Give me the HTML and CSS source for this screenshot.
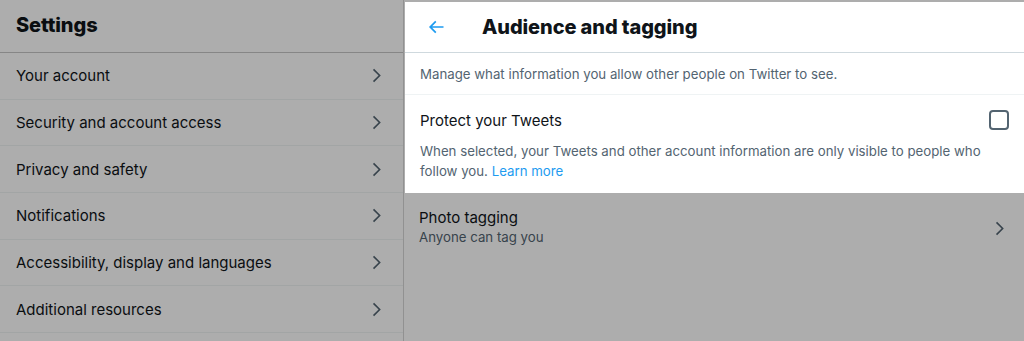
FILE: index.html
```html
<!DOCTYPE html>
<html>
<head>
<meta charset="utf-8">
<link rel="stylesheet" href="styles.css">
</head>
<body>
<div class="app">
  <nav class="nav">
    <div class="nav-head"><h1>Settings</h1></div>
    <div class="nav-row"><span>Your account</span><svg class="chev" viewBox="0 0 24 24"><path d="M14.586 12L7.543 4.96l1.414-1.42L17.414 12l-8.457 8.46-1.414-1.42L14.586 12z"/></svg></div>
    <div class="nav-row"><span>Security and account access</span><svg class="chev" viewBox="0 0 24 24"><path d="M14.586 12L7.543 4.96l1.414-1.42L17.414 12l-8.457 8.46-1.414-1.42L14.586 12z"/></svg></div>
    <div class="nav-row"><span>Privacy and safety</span><svg class="chev" viewBox="0 0 24 24"><path d="M14.586 12L7.543 4.96l1.414-1.42L17.414 12l-8.457 8.46-1.414-1.42L14.586 12z"/></svg></div>
    <div class="nav-row"><span>Notifications</span><svg class="chev" viewBox="0 0 24 24"><path d="M14.586 12L7.543 4.96l1.414-1.42L17.414 12l-8.457 8.46-1.414-1.42L14.586 12z"/></svg></div>
    <div class="nav-row"><span>Accessibility, display and languages</span><svg class="chev" viewBox="0 0 24 24"><path d="M14.586 12L7.543 4.96l1.414-1.42L17.414 12l-8.457 8.46-1.414-1.42L14.586 12z"/></svg></div>
    <div class="nav-row"><span>Additional resources</span><svg class="chev" viewBox="0 0 24 24"><path d="M14.586 12L7.543 4.96l1.414-1.42L17.414 12l-8.457 8.46-1.414-1.42L14.586 12z"/></svg></div>
  </nav>
  <main class="detail">
    <section class="focus">
      <div class="detail-head">
        <svg class="back" viewBox="0 0 24 24"><path d="M7.414 13l5.043 5.04-1.414 1.42L3.586 12l7.457-7.46 1.414 1.42L7.414 11H21v2H7.414z"/></svg>
        <h2>Audience and tagging</h2>
      </div>
      <p class="intro">Manage what information you allow other people on Twitter to see.</p>
      <div class="protect">
        <div class="protect-top">
          <span class="label">Protect your Tweets</span>
          <span class="checkbox"></span>
        </div>
        <p class="desc"><span>When selected, your Tweets and other account information are only visible to people who follow you.</span> <span class="link">Learn more</span></p>
      </div>
    </section>
    <div class="tag-row">
      <div class="tag-text">
        <div class="label">Photo tagging</div>
        <div class="sub">Anyone can tag you</div>
      </div>
      <svg class="chev" viewBox="0 0 24 24"><path d="M14.586 12L7.543 4.96l1.414-1.42L17.414 12l-8.457 8.46-1.414-1.42L14.586 12z"/></svg>
    </div>
  </main>
</div>
</body>
</html>
```
FILE: styles.css
```css
* { box-sizing: border-box; }
html, body { margin: 0; padding: 0; }
body {
  width: 1024px;
  height: 341px;
  overflow: hidden;
  background: #ffffff;
  font-family: Inter, "Liberation Sans", sans-serif;
  color: #0f1419;
}
.app {
  display: flex;
  height: 341px;
}
.nav {
  width: 404px;
  flex: none;
  border-right: 1px solid #d6d6d6;
}
.nav-head {
  height: 53px;
  border-bottom: 1px solid #c6c6c6;
  display: flex;
  align-items: center;
  padding: 0 16px 2px;
}
.nav-head h1 {
  margin: 0;
  font-size: 20px;
  font-weight: 800;
  letter-spacing: -0.1px;
}
.nav-row {
  height: 46.67px;
  border-bottom: 1px solid #eff3f4;
  display: flex;
  align-items: center;
  justify-content: space-between;
  padding: 0 16px;
  font-size: 15px;
}
.chev {
  width: 19px;
  height: 19px;
  fill: #536471;
  flex: none;
}
.nav-row .chev { margin-right: 1px; }
.detail {
  flex: 1;
  padding-top: 2px;
}
.focus {
  position: relative;
  z-index: 1;
  margin-left: 1px;
  background: #ffffff;
  box-shadow: 0 0 0 3000px rgba(0, 0, 0, 0.32);
}
.detail-head {
  height: 51px;
  border-bottom: 1px solid #cfd9de;
  display: flex;
  align-items: center;
  padding: 0 16px 1px 21px;
}
.back {
  width: 20px;
  height: 20px;
  fill: #1d9bf0;
  margin-right: 36px;
}
.detail-head h2 {
  margin: 0;
  font-size: 20px;
  font-weight: 800;
  letter-spacing: -0.1px;
}
.intro {
  margin: 0;
  height: 42px;
  display: flex;
  align-items: center;
  padding: 0 15px;
  font-size: 13.25px;
  color: #536471;
  border-bottom: 1px solid #eff3f4;
}
.protect {
  padding: 13px 15px 12px;
}
.protect-top {
  display: flex;
  align-items: center;
  justify-content: space-between;
  height: 24px;
}
.label {
  font-size: 15px;
  color: #0f1419;
}
.checkbox {
  width: 20px;
  height: 20px;
  border: 2px solid #536471;
  border-radius: 4px;
}
.desc {
  margin: 9px 0 0;
  font-size: 13.25px;
  line-height: 20px;
  color: #536471;
}
.link {
  color: #1d9bf0;
}
.tag-row {
  display: flex;
  align-items: center;
  justify-content: space-between;
  padding: 15px 15px 0 15px;
}
.tag-text .sub {
  font-size: 13.25px;
  color: #536471;
  margin-top: 2px;
}
.tag-row .chev { margin-right: 0; margin-top: 4px; }
```
